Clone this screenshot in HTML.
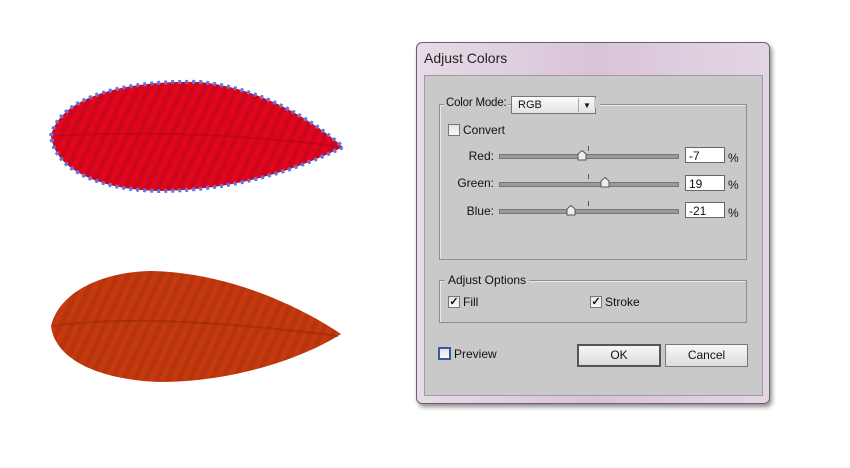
<!DOCTYPE html>
<html><head><style>
body{margin:0;width:850px;height:468px;background:#fff;position:relative;overflow:hidden;font-family:"Liberation Sans",sans-serif;font-size:11px;color:#111}
.a{position:absolute}
.dlg{left:416px;top:42px;width:352px;height:360px;border:1px solid #6a5f6a;border-radius:6px;background:linear-gradient(90deg,#e6dbe6,#d8c4d8 50%,#e3d6e3);box-shadow:2px 3px 5px rgba(0,0,0,.45)}
.inner{left:424px;top:75px;width:337px;height:319px;background:#c9c9c9;border:1px solid #a09aa0}
.grp{border:1px solid #8e8e8e;box-shadow:inset 1px 1px 0 #e8e8e8}
.lg{background:#c9c9c9;padding:0 3px}
.cb{width:10px;height:10px;border:1px solid #777;background:linear-gradient(#e4e4e4,#fafafa)}
.track{height:3px;border:1px solid #777;background:#9a9a9a;width:178px;left:499px}
.inp{height:16px;background:#fff;border:1px solid #666;left:685px;font-size:12px;line-height:16px;padding-left:3px;box-sizing:border-box;width:40px}
.btn{height:21px;border:1px solid #777;background:linear-gradient(#f7f7f7,#dcdcdc);text-align:center;line-height:21px;font-size:12px}
.lbl{text-align:right;width:60px;font-size:12px}
</style></head><body>
<svg class="a" style="left:0;top:0" width="400" height="468">
<defs>
<pattern id="st" width="10" height="200" patternUnits="userSpaceOnUse" patternTransform="rotate(25)"><rect width="5" height="200" fill="rgba(0,0,0,0.08)"/></pattern>
</defs>
<path d="M51,136 C60,95 130,80 200,82 C260,88 310,118 343,147 C300,168 240,190 160,191 C100,190 55,170 51,136Z" fill="#e0061d" stroke="#5f78e8" stroke-width="4" stroke-dasharray="3 4"/>
<path d="M51,136 C60,95 130,80 200,82 C260,88 310,118 343,147 C300,168 240,190 160,191 C100,190 55,170 51,136Z" fill="url(#st)"/>
<path d="M55,136 Q200,128 340,147" stroke="#b4001a" stroke-width="2" fill="none" opacity=".5"/>
<path d="M51,326 C60,290 105,272 150,271 C220,272 290,300 341,334 C300,360 230,382 160,382 C100,380 55,360 51,326Z" fill="#c6390e"/>
<path d="M51,326 C60,290 105,272 150,271 C220,272 290,300 341,334 C300,360 230,382 160,382 C100,380 55,360 51,326Z" fill="url(#st)"/>
<path d="M53,326 Q150,312 338,336" stroke="#9a2a08" stroke-width="2" fill="none" opacity=".6"/>
</svg>
<div class="a dlg"></div>
<div class="a" style="left:424px;top:50px;font-size:14px;color:#222">Adjust Colors</div>
<div class="a inner"></div>
<div class="a grp" style="left:439px;top:104px;width:306px;height:154px"></div>
<div class="a lg" style="left:444px;top:97px;font-size:11.5px;letter-spacing:-0.2px;padding:0 2px">Color Mode:</div>
<div class="a" style="left:511px;top:96px;width:83px;height:16px;border:1px solid #777;background:linear-gradient(#fbfbfb,#e2e2e2);font-size:11px;line-height:16px"><span style="padding-left:6px">RGB</span><span class="a" style="left:66px;top:1px;height:14px;border-left:1px solid #aaa;width:16px;text-align:center;font-size:8px">▼</span></div>
<div class="a" style="left:594px;top:98px;width:6px;height:10px;background:#c9c9c9"></div>
<div class="a cb" style="left:448px;top:124px"></div>
<div class="a" style="left:463px;top:123px;font-size:12px">Convert</div>
<div class="a lbl" style="left:434px;top:149px">Red:</div>
<div class="a lbl" style="left:434px;top:176px">Green:</div>
<div class="a lbl" style="left:434px;top:204px">Blue:</div>
<div class="a track" style="top:154px"></div>
<div class="a track" style="top:182px"></div>
<div class="a track" style="top:209px"></div>
<div class="a" style="left:588px;top:146px;width:1px;height:5px;background:#555"></div>
<div class="a" style="left:588px;top:174px;width:1px;height:5px;background:#555"></div>
<div class="a" style="left:588px;top:201px;width:1px;height:5px;background:#555"></div>
<svg class="a" style="left:577px;top:150px" width="10" height="11"><path d="M1,4 L5,0.5 L9,4 L9,10 L1,10Z" fill="#eee" stroke="#555"/></svg>
<svg class="a" style="left:600px;top:177px" width="10" height="11"><path d="M1,4 L5,0.5 L9,4 L9,10 L1,10Z" fill="#eee" stroke="#555"/></svg>
<svg class="a" style="left:566px;top:205px" width="10" height="11"><path d="M1,4 L5,0.5 L9,4 L9,10 L1,10Z" fill="#eee" stroke="#555"/></svg>
<div class="a inp" style="top:147px">-7</div>
<div class="a inp" style="top:175px">19</div>
<div class="a inp" style="top:202px">-21</div>
<div class="a" style="left:728px;top:151px;font-size:12px">%</div>
<div class="a" style="left:728px;top:178px;font-size:12px">%</div>
<div class="a" style="left:728px;top:206px;font-size:12px">%</div>
<div class="a grp" style="left:439px;top:280px;width:306px;height:41px"></div>
<div class="a lg" style="left:445px;top:273px;font-size:12px">Adjust Options</div>
<div class="a cb" style="left:448px;top:296px;font-size:11px;line-height:10px;text-align:center;font-weight:bold">✓</div>
<div class="a" style="left:463px;top:295px;font-size:12px">Fill</div>
<div class="a cb" style="left:590px;top:296px;font-size:11px;line-height:10px;text-align:center;font-weight:bold">✓</div>
<div class="a" style="left:605px;top:295px;font-size:12px">Stroke</div>
<div class="a cb" style="left:438px;top:347px;border:2px solid #3a5a9a;width:9px;height:9px"></div>
<div class="a" style="left:454px;top:347px;font-size:12px">Preview</div>
<div class="a btn" style="left:577px;top:344px;width:80px;border:2px solid #555;height:19px;line-height:19px">OK</div>
<div class="a btn" style="left:665px;top:344px;width:81px">Cancel</div>
</body></html>
